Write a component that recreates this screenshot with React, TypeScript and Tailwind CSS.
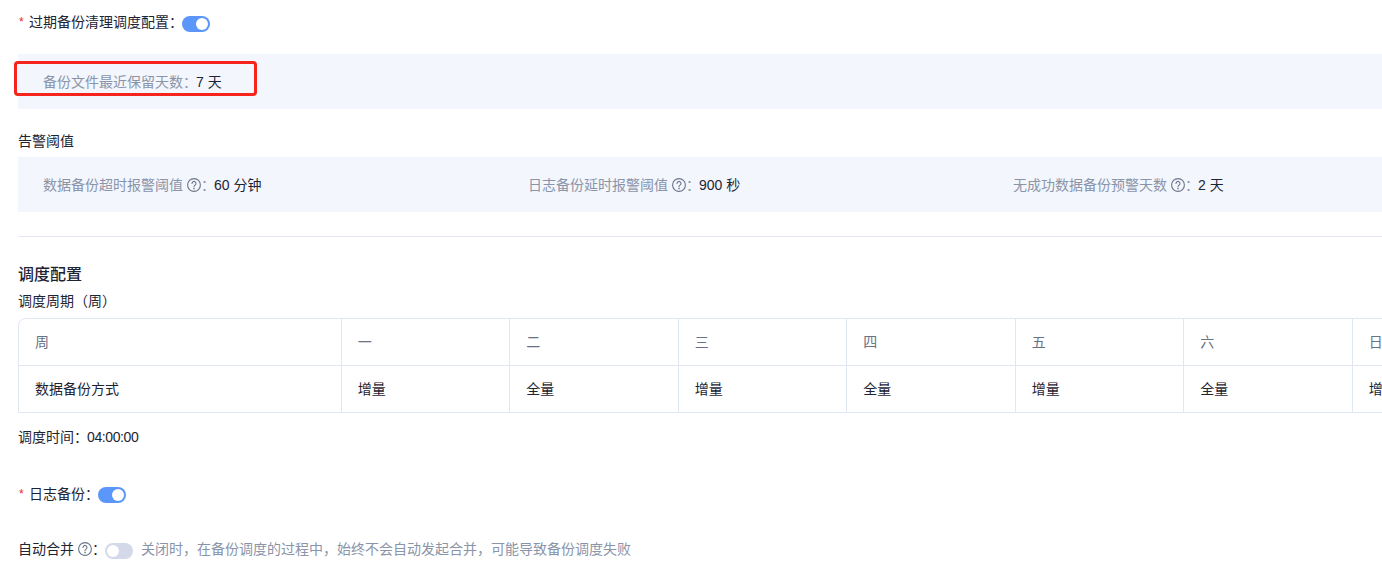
import type { ReactNode } from "react";

const weekdays = ["一", "二", "三", "四", "五", "六", "日"];
const backupTypes = ["增量", "全量", "增量", "全量", "增量", "全量", "增量"];

function Toggle({ on, className = "" }: { on: boolean; className?: string }) {
  return (
    <span
      className={`flex h-4 w-7 shrink-0 items-center rounded-full px-0.5 ${
        on ? "justify-end bg-[#5b96fa]" : "justify-start bg-[#d3d9e8]"
      } ${className}`}
    >
      <span className="size-3 rounded-full bg-white" />
    </span>
  );
}

function Help() {
  return (
    <svg className="ml-1 size-[14px] shrink-0 text-[#6b7588]" viewBox="0 0 14 14" fill="none" stroke="currentColor">
      <circle cx="7" cy="7" r="6.4" strokeWidth="1.1" />
      <path d="M5 5.4a2 2 0 1 1 3.1 1.7c-.7.5-1.1.8-1.1 1.6" strokeWidth="1.1" strokeLinecap="round" />
      <circle cx="7" cy="10.6" r=".8" fill="currentColor" stroke="none" />
    </svg>
  );
}

function Field({ label, help, children }: { label: string; help?: boolean; children: ReactNode }) {
  return (
    <div className="flex items-center text-sm">
      <span className="text-[#8a94a8]">{label}</span>
      {help && <Help />}
      <span className="text-[#8a94a8]">{"\uFF1A"}</span>
      <span className="-ml-px text-[#1d2433]">{children}</span>
    </div>
  );
}

function Required({ children }: { children: ReactNode }) {
  return (
    <div className="flex items-center text-sm text-[#1d2433]">
      <span className="mr-[5px] ml-px w-[5px] text-xs text-[#f5222d]">*</span>
      {children}
    </div>
  );
}

export default function App() {
  return (
    <div
      className="relative h-[582px] w-[1382px] overflow-hidden bg-white pl-[18px]"
      style={{ fontFamily: '"Liberation Sans", "Noto Sans CJK SC", sans-serif' }}
    >
      {/* 过期备份清理 */}
      <div className="pt-3">
        <Required>
          <span>{"过期备份清理调度配置\uFF1A"}</span>
          <Toggle on className="mt-1 -ml-px" />
        </Required>
      </div>
      <div className="mt-[22px] flex h-[55px] w-[1400px] items-center bg-[#f3f6fd] pl-[25px]">
        <Field label="备份文件最近保留天数">7 天</Field>
      </div>

      {/* 告警阈值 */}
      <div className="mt-[22px] text-sm text-[#1d2433]">告警阈值</div>
      <div className="mt-1.5 flex h-[55px] w-[1400px] items-center bg-[#f3f6fd] pl-[25px]">
        <div className="w-[485px]">
          <Field label="数据备份超时报警阈值" help>
            60 分钟
          </Field>
        </div>
        <div className="w-[485px]">
          <Field label="日志备份延时报警阈值" help>
            900 秒
          </Field>
        </div>
        <Field label="无成功数据备份预警天数" help>
          2 天
        </Field>
      </div>

      <div className="mt-6 h-px w-[1400px] bg-[#e3e7f2]" />

      {/* 调度配置 */}
      <div className="mt-[26px] text-base font-medium text-[#1d2433]">调度配置</div>
      <div className="mt-1 text-sm text-[#1d2433]">{"调度周期\uFF08周\uFF09"}</div>
      <div className="mt-[7px] w-[1420px] overflow-hidden rounded-tl-lg border border-[#e1e6f3] text-sm">
        <div className="flex h-[47px] items-center border-b border-[#e1e6f3] text-[#687385]">
          <div className="flex h-full w-[321.7px] shrink-0 items-center pl-4">周</div>
          {weekdays.map((day) => (
            <div key={day} className="flex h-full w-[168.5px] shrink-0 items-center border-l border-[#e1e6f3] pl-4">
              {day}
            </div>
          ))}
        </div>
        <div className="flex h-[46px] items-center text-[#1d2433]">
          <div className="flex h-full w-[321.7px] shrink-0 items-center pl-4">数据备份方式</div>
          {backupTypes.map((type, index) => (
            <div key={index} className="flex h-full w-[168.5px] shrink-0 items-center border-l border-[#e1e6f3] pl-4">
              {type}
            </div>
          ))}
        </div>
      </div>
      <div className="mt-3.5 flex text-sm text-[#1d2433]">
        <span>{"调度时间\uFF1A"}</span>
        <span className="-ml-px tracking-[-0.4px]">04:00:00</span>
      </div>

      {/* 日志备份 */}
      <div className="mt-[37px]">
        <Required>
          <span>{"日志备份\uFF1A"}</span>
          <Toggle on className="mt-0.5 -ml-px" />
        </Required>
      </div>
      <div className="mt-[35px] flex items-center text-sm text-[#1d2433]">
        <span>自动合并</span>
        <Help />
        <span>{"\uFF1A"}</span>
        <Toggle on={false} className="mt-1 -ml-px" />
        <span className="ml-2 text-[#8a94a8]">
          {"关闭时\uFF0C在备份调度的过程中\uFF0C始终不会自动发起合并\uFF0C可能导致备份调度失败"}
        </span>
      </div>

      {/* 截图上的红色标注框 */}
      <div className="absolute top-[61px] left-[14px] h-[35px] w-[243px] rounded-sm border-[3px] border-[#f5241c]" />
    </div>
  );
}
